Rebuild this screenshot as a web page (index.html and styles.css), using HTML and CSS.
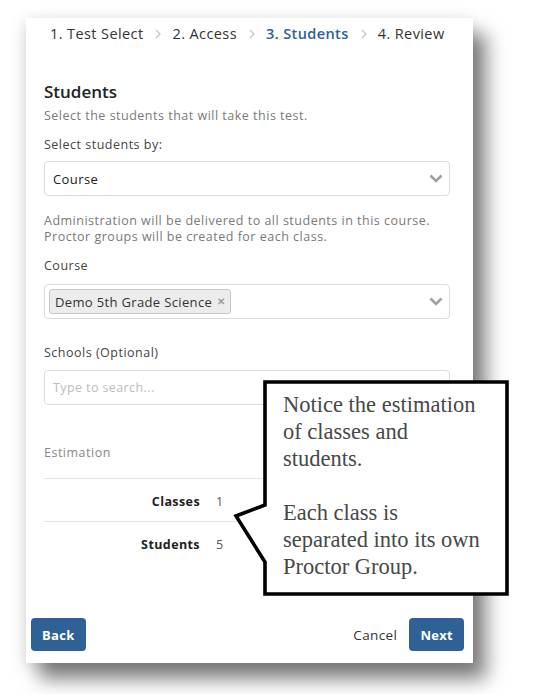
FILE: index.html
```html
<!DOCTYPE html>
<html lang="en">
<head>
<meta charset="utf-8">
<title>Students</title>
<link rel="stylesheet" href="styles.css">
</head>
<body>
<div class="card">
  <nav class="steps">
    <span class="step">1. Test Select</span>
    <svg class="sep" viewBox="0 0 6 10" width="6" height="10"><path d="M1 1 L5 5 L1 9" fill="none" stroke="#c4c4c4" stroke-width="1.2"/></svg>
    <span class="step">2. Access</span>
    <svg class="sep" viewBox="0 0 6 10" width="6" height="10"><path d="M1 1 L5 5 L1 9" fill="none" stroke="#c4c4c4" stroke-width="1.2"/></svg>
    <span class="step active">3. Students</span>
    <svg class="sep" viewBox="0 0 6 10" width="6" height="10"><path d="M1 1 L5 5 L1 9" fill="none" stroke="#c4c4c4" stroke-width="1.2"/></svg>
    <span class="step">4. Review</span>
  </nav>

  <section class="content">
    <h2 class="title">Students</h2>
    <p class="sub">Select the students that will take this test.</p>

    <div class="label l1">Select students by:</div>
    <div class="field f1">
      <span class="value">Course</span>
      <svg class="chev" viewBox="0 0 14 9" width="14" height="9"><path d="M1.5 1.5 L7 7 L12.5 1.5" fill="none" stroke="#a0a0a0" stroke-width="2.6"/></svg>
    </div>

    <p class="help">Administration will be delivered to all students in this course.<br>Proctor groups will be created for each class.</p>

    <div class="label l2">Course</div>
    <div class="field f2">
      <span class="chip">Demo 5th Grade Science <span class="x">✕</span></span>
      <svg class="chev" viewBox="0 0 14 9" width="14" height="9"><path d="M1.5 1.5 L7 7 L12.5 1.5" fill="none" stroke="#a0a0a0" stroke-width="2.6"/></svg>
    </div>

    <div class="label l3">Schools (Optional)</div>
    <div class="field f3">
      <span class="placeholder">Type to search...</span>
    </div>

    <div class="est-title">Estimation</div>
    <div class="est">
      <div class="row"><span class="k">Classes</span><span class="v">1</span></div>
      <div class="row"><span class="k">Students</span><span class="v">5</span></div>
    </div>
  </section>

  <footer class="footer">
    <button class="btn">Back</button>
    <div class="right">
      <span class="cancel">Cancel</span>
      <button class="btn">Next</button>
    </div>
  </footer>
</div>

<div class="callout">
  <svg class="bubble" viewBox="0 0 280 220" width="280" height="220">
    <path d="M33 4 H275 V216 H33 V184 L4 138 L33 127 Z" fill="#fff" stroke="#000" stroke-width="3.6" stroke-linejoin="miter"/>
  </svg>
  <div class="callout-text">
    <p>Notice the estimation<br>of classes and<br>students.</p>
    <p>Each class is<br>separated into its own<br>Proctor Group.</p>
  </div>
</div>
</body>
</html>
```

FILE: styles.css
```css
html, body {
  margin: 0;
  padding: 0;
  background: #fff;
}

body {
  width: 534px;
  height: 694px;
  position: relative;
  overflow: hidden;
  font-family: "Open Sans", "Noto Sans", sans-serif;
}

.card {
  margin: 18px 0 0 26px;
  width: 447px;
  height: 645px;
  background: #fff;
  display: flex;
  flex-direction: column;
  box-shadow: 13px 16px 18px rgba(0, 0, 0, 0.5), -2px 2px 14px rgba(0, 0, 0, 0.12);
}

.steps {
  display: flex;
  align-items: center;
  padding: 6px 0 0 24px;
  height: 20px;
  font-size: 14.5px;
  line-height: 20px;
  letter-spacing: 0.4px;
  color: #333;
}

.sep {
  margin: 0 11px 0 12px;
}

.step.active {
  color: #2f6196;
  font-weight: 600;
}

.content {
  padding: 0 23px 0 18px;
  display: flex;
  flex-direction: column;
}

.title {
  margin: 37px 0 0;
  font-size: 17px;
  line-height: 22px;
  font-weight: 600;
  color: #222;
}

.sub {
  margin: 5px 0 0;
  font-size: 12.5px;
  line-height: 16px;
  letter-spacing: 0.5px;
  color: #7a7a7a;
}

.label {
  font-size: 12.5px;
  line-height: 16px;
  letter-spacing: 0.5px;
  color: #444;
}

.l1 { margin-top: 13px; }
.l2 { margin-top: 14px; }
.l3 { margin-top: 26px; }

.field {
  box-sizing: border-box;
  height: 35px;
  border: 1px solid #dcdcdc;
  border-radius: 4px;
  display: flex;
  align-items: center;
  padding: 0 6px 0 8px;
}

.f1 { margin-top: 8px; }
.f2 { margin-top: 10px; padding-left: 4px; }
.f3 { margin-top: 9px; }

.value {
  flex: 1;
  font-size: 13px;
  letter-spacing: 0.4px;
  color: #222;
}

.chev {
  margin-left: auto;
}

.chip {
  box-sizing: border-box;
  height: 25px;
  display: inline-flex;
  align-items: center;
  padding: 0 4px 0 5px;
  background: #ececec;
  border: 1px solid #c9c9c9;
  border-radius: 3px;
  font-size: 13px;
  letter-spacing: 0.35px;
  color: #333;
}

.chip .x {
  margin-left: 5px;
  font-size: 9.5px;
  font-weight: 700;
  color: #9a9a9a;
}

.placeholder {
  font-size: 12.5px;
  letter-spacing: 0.4px;
  color: #bcbcbc;
}

.help {
  margin: 17px 0 0;
  font-size: 12.5px;
  line-height: 15.5px;
  letter-spacing: 0.5px;
  color: #7a7a7a;
}

.est-title {
  margin-top: 40px;
  font-size: 12.5px;
  line-height: 16px;
  letter-spacing: 0.5px;
  color: #888;
}

.est {
  margin-top: 17px;
}

.row {
  box-sizing: border-box;
  height: 43px;
  display: flex;
  align-items: center;
  padding-top: 3px;
  border-top: 1px solid #e4e4e4;
}

.row:last-child {
  padding-top: 2px;
}

.k {
  width: 156px;
  text-align: right;
  font-size: 12.5px;
  letter-spacing: 0.4px;
  font-weight: 700;
  color: #222;
}

.v {
  margin-left: 16px;
  font-size: 12.5px;
  color: #555;
}

.footer {
  margin-top: auto;
  display: flex;
  justify-content: space-between;
  align-items: center;
  padding: 0 9px 12px 5px;
}

.right {
  display: flex;
  align-items: center;
}

.cancel {
  font-size: 13.5px;
  letter-spacing: 0.4px;
  color: #333;
  margin-right: 12px;
}

.btn {
  box-sizing: border-box;
  height: 33px;
  padding: 0 11px;
  border: none;
  border-radius: 4px;
  background: #2f6196;
  color: #fff;
  font-family: inherit;
  font-size: 13px;
  letter-spacing: 0.3px;
  font-weight: 700;
}

.callout {
  position: absolute;
  left: 232px;
  top: 378px;
  width: 280px;
  height: 220px;
}

.bubble {
  position: absolute;
  left: 0;
  top: 0;
}

.callout-text {
  position: absolute;
  left: 51px;
  top: 13px;
  font-family: "Liberation Serif", "Times New Roman", serif;
  font-size: 22.5px;
  line-height: 27px;
  color: #484848;
}

.callout-text p {
  margin: 0 0 27px;
}
```
